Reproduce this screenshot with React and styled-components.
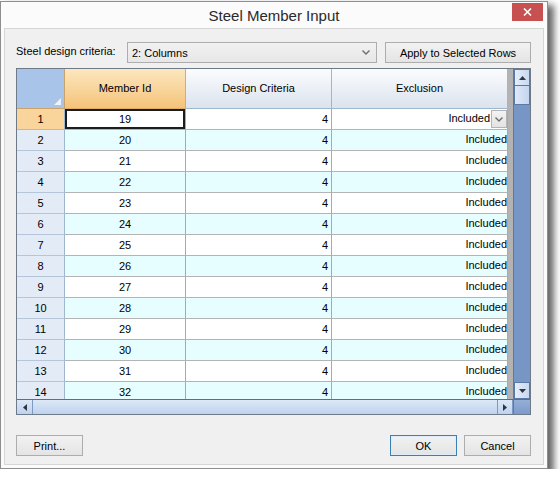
import React from 'react'
import styled, { createGlobalStyle } from 'styled-components'

const GlobalStyle = createGlobalStyle`
    html, body { margin: 0; padding: 0; background: #ffffff; }
    body {
        font-family: "Liberation Sans", Arial, sans-serif;
        font-size: 11px;
        color: #000;
    }
`

const rows = Array.from({length: 14}, (_, i) => ({
    n: i + 1,
    id: 19 + i,
    crit: 4,
    excl: 'Included',
}))

const Chevron = () => (
    <svg width="8" height="5" viewBox="0 0 8 5">
        <path d="M0.5 0.5 L4 4 L7.5 0.5" fill="none" stroke="#6d6d6d" strokeWidth="1.4" />
    </svg>
)

const Arrow = ({dir}) => {
    const pts = {
        up: '0,4 3.5,0 7,4',
        down: '0,0 7,0 3.5,4',
        left: '4,0 4,7 0,3.5',
        right: '0,0 0,7 4,3.5',
    }[dir]
    const vertical = dir === 'up' || dir === 'down'
    return (
        <svg width={vertical ? 7 : 4} height={vertical ? 4 : 7} viewBox={vertical ? '0 0 7 4' : '0 0 4 7'}>
            <polygon points={pts} fill="#2f3640" />
        </svg>
    )
}

export default function App() {
    return (
        <>
            <GlobalStyle />
            <Window>
                <TitleBar>
                    <Title>Steel Member Input</Title>
                    <CloseButton>
                        <svg width="9" height="8" viewBox="0 0 9 8">
                            <path d="M1 0.5 L8 7.5 M8 0.5 L1 7.5" stroke="#fff" strokeWidth="1.6" />
                        </svg>
                    </CloseButton>
                </TitleBar>
                <Client>
                    <Toolbar>
                        <Label>Steel design criteria:</Label>
                        <Combo>
                            <span>2: Columns</span>
                            <Chevron />
                        </Combo>
                        <Button w={146} gap={8}>Apply to Selected Rows</Button>
                    </Toolbar>
                    <GridFrame>
                        <Viewport>
                            <Table>
                                <Corner />
                                <HeadCell active>Member Id</HeadCell>
                                <HeadCell>Design Criteria</HeadCell>
                                <HeadCell>Exclusion</HeadCell>
                                {rows.map((r, i) => (
                                    <React.Fragment key={r.n}>
                                        <RowHead active={i === 0}>{r.n}</RowHead>
                                        <Cell alt={i % 2 === 1} align="center" current={i === 0}>{r.id}</Cell>
                                        <Cell alt={i % 2 === 1} align="flex-end" pad={3}>{r.crit}</Cell>
                                        <Cell alt={i % 2 === 1} align="flex-end" pad={0}>
                                            <span>{r.excl}</span>
                                            {i === 0 && <DropButton><Chevron /></DropButton>}
                                        </Cell>
                                    </React.Fragment>
                                ))}
                            </Table>
                        </Viewport>
                        <VScroll>
                            <ScrollButton><Arrow dir="up" /></ScrollButton>
                            <VThumb />
                            <Track />
                            <ScrollButton><Arrow dir="down" /></ScrollButton>
                        </VScroll>
                        <HScroll>
                            <HButton><Arrow dir="left" /></HButton>
                            <HThumb />
                            <HButton><Arrow dir="right" /></HButton>
                        </HScroll>
                        <ScrollCorner />
                    </GridFrame>
                    <Footer>
                        <Button w={67}>Print...</Button>
                        <Spacer />
                        <Button w={67} primary>OK</Button>
                        <Button w={67} gap={7}>Cancel</Button>
                    </Footer>
                </Client>
            </Window>
        </>
    )
}

const Window = styled.div`
    width: 548px;
    box-sizing: border-box;
    margin-top: 1px;
    border: 1px solid #8e8e8e;
    background: #fbfbfb;
    padding: 0 3px 3px;
    box-shadow: 5px 5px 7px 1px rgba(0, 0, 0, 0.6);
`
const TitleBar = styled.div`
    height: 26px;
    display: grid;
    grid-template-columns: 1fr auto 1fr;
    align-items: start;
`
const Title = styled.div`
    grid-column: 2;
    font-size: 15px;
    line-height: 28px;
    color: #2a2a2a;
`
const CloseButton = styled.div`
    grid-column: 3;
    justify-self: end;
    width: 31px;
    height: 18px;
    margin: 1px 1px 0 0;
    background: #c75050;
    display: flex;
    align-items: center;
    justify-content: center;
`
const Client = styled.div`
    border: 1px solid #d6d6d6;
    background: #f0f0f0;
    padding: 13px 11px 8px;
    display: flex;
    flex-direction: column;
`
const Toolbar = styled.div`
    display: flex;
    align-items: center;
    height: 21px;
    margin-bottom: 5px;
`
const Label = styled.span`
    width: 111px;
    padding-bottom: 3px;
`
const Combo = styled.div`
    width: 250px;
    height: 21px;
    box-sizing: border-box;
    border: 1px solid #adadad;
    background: linear-gradient(#f1f1f1, #e7e7e7);
    display: flex;
    align-items: center;
    justify-content: space-between;
    padding: 0 6px 0 4px;
`
const Button = styled.button`
    width: ${p => p.w}px;
    height: 21px;
    margin-left: ${p => p.gap || 0}px;
    box-sizing: border-box;
    border: 1px solid ${p => p.primary ? '#3c7fb1' : '#adadad'};
    box-shadow: ${p => p.primary ? 'inset 0 0 0 1px #dcecfc' : 'none'};
    background: linear-gradient(#f2f2f2, #e4e4e4);
    font: inherit;
    color: #000;
    padding: 0;
`
const GridFrame = styled.div`
    width: 515px;
    box-sizing: border-box;
    border: 1px solid #6f7a88;
    display: grid;
    grid-template-columns: 496px 17px;
    grid-template-rows: 330px 15px;
`
const Viewport = styled.div`
    overflow: hidden;
    background: #b3b3b3;
`
const Table = styled.div`
    display: grid;
    grid-template-columns: 48px 121px 146px 176px;
    grid-template-rows: 40px;
    grid-auto-rows: 21px;
    width: 491px;
`
const Corner = styled.div`
    position: relative;
    background: #a9c4e9;
    border-right: 1px solid #c9a46a;
    border-bottom: 1px solid #c9a46a;
    &::after {
        content: '';
        position: absolute;
        right: 3px;
        bottom: 3px;
        border-left: 7px solid transparent;
        border-bottom: 7px solid #eef3fa;
    }
`
const HeadCell = styled.div`
    display: flex;
    align-items: center;
    justify-content: center;
    padding-bottom: 2px;
    box-sizing: border-box;
    border-right: 1px solid #9eb6ce;
    border-bottom: 1px solid ${p => p.active ? '#e0ad62' : '#9eb6ce'};
    background: ${p => p.active
        ? 'linear-gradient(#fce7bf, #f5c37a)'
        : 'linear-gradient(#fbfcfe, #dbe3ee)'};
`
const RowHead = styled.div`
    display: flex;
    align-items: center;
    justify-content: center;
    box-sizing: border-box;
    border-right: 1px solid #9eb6ce;
    border-bottom: 1px solid ${p => p.active ? '#e0b56f' : '#b5c5da'};
    background: ${p => p.active ? '#f9d59c' : '#e3ebf6'};
`
const Cell = styled.div`
    display: flex;
    align-items: center;
    justify-content: ${p => p.align};
    padding-right: ${p => p.pad || 0}px;
    box-sizing: border-box;
    overflow: hidden;
    white-space: nowrap;
    border-right: 1px solid #a9a9a9;
    border-bottom: 1px solid #b4b4b4;
    background: ${p => p.alt ? '#e6feff' : '#ffffff'};
    box-shadow: ${p => p.current ? 'inset 0 0 0 2px #1c1c1c' : 'none'};
    & > span {
        margin-bottom: 2px;
    }
`
const DropButton = styled.div`
    width: 16px;
    height: 18px;
    margin-left: 1px;
    box-sizing: border-box;
    border: 1px solid #b4b4b4;
    background: linear-gradient(#f3f3f3, #e3e3e3);
    display: flex;
    align-items: center;
    justify-content: center;
`
const VScroll = styled.div`
    display: flex;
    flex-direction: column;
    background: #7896c5;
    border-left: 1px solid #5d7aa6;
`
const ScrollButton = styled.div`
    height: 17px;
    box-sizing: border-box;
    border: 1px solid #5b79a7;
    background: linear-gradient(to right, #e6eef9, #c7d8f0);
    display: flex;
    align-items: center;
    justify-content: center;
`
const VThumb = styled.div`
    height: 19px;
    box-sizing: border-box;
    border: 1px solid #5b79a7;
    border-top: none;
    background: linear-gradient(to right, #dfe9f8, #c3d5ef);
`
const Track = styled.div`
    flex: 1;
`
const HScroll = styled.div`
    display: flex;
    border-top: 1px solid #5b6f8c;
    background: linear-gradient(#dde8f7, #bfd2ee);
`
const HButton = styled.div`
    width: 16px;
    box-sizing: border-box;
    border-right: 1px solid #7e99c2;
    border-left: 1px solid #7e99c2;
    display: flex;
    align-items: center;
    justify-content: center;
    &:first-child { border-left: none; }
`
const HThumb = styled.div`
    flex: 1;
`
const ScrollCorner = styled.div`
    border-top: 1px solid #5b6f8c;
    border-left: 1px solid #5d7aa6;
    background: linear-gradient(#94afd6, #7c9acb);
`
const Footer = styled.div`
    display: flex;
    align-items: center;
    margin-top: 20px;
    padding-right: 1px;
`
const Spacer = styled.div`
    flex: 1;
`
